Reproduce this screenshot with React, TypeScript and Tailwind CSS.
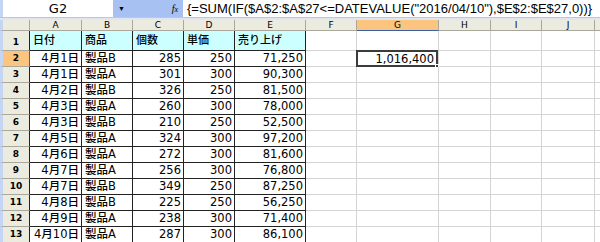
const cols = ['A', 'B', 'C', 'D', 'E', 'F', 'G', 'H', 'I', 'J']

const rows: [string, string, string, string, string][] = [
  ['4月1日', '製品B', '285', '250', '71,250'],
  ['4月1日', '製品A', '301', '300', '90,300'],
  ['4月2日', '製品B', '326', '250', '81,500'],
  ['4月3日', '製品A', '260', '300', '78,000'],
  ['4月3日', '製品B', '210', '250', '52,500'],
  ['4月5日', '製品A', '324', '300', '97,200'],
  ['4月6日', '製品A', '272', '300', '81,600'],
  ['4月7日', '製品A', '256', '300', '76,800'],
  ['4月7日', '製品B', '349', '250', '87,250'],
  ['4月8日', '製品B', '225', '250', '56,250'],
  ['4月9日', '製品A', '238', '300', '71,400'],
  ['4月10日', '製品A', '287', '300', '86,100'],
]

const grid = 'grid grid-cols-[30px_52px_51px_51px_51px_71px_51px_82px_52px_51px_53px_5px]'
const jp = "font-['DejaVu_Sans','Noto_Sans_CJK_JP',sans-serif]"
const num = "font-['DejaVu_Sans',sans-serif]"

export default function App() {
  return (
    <div className="w-[600px] h-[242px] overflow-hidden bg-white text-black">
      {/* formula bar */}
      <div className="flex h-[18px] border-b border-[#b8c8e0] bg-[#c4d6f4]">
        <div className="w-[3px]" />
        <div className={`w-[110px] bg-white flex items-center justify-center text-[13px] ${num}`}>G2</div>
        <div className="w-[70px] bg-[#a7c1f2] flex items-center justify-between px-[5px]">
          <span className="text-[7px] leading-none">▼</span>
          <span className="italic text-[10px] font-['Liberation_Serif',serif]">f<span className="text-[8px]">x</span></span>
        </div>
        <div className="flex-1 bg-white flex items-center pl-[4px] whitespace-nowrap overflow-hidden">
          <span className="text-[13px] font-['Liberation_Sans',sans-serif]">
            {'{=SUM(IF($A$2:$A$27<=DATEVALUE("2016/04/10"),$E$2:$E$27,0))}'}
          </span>
        </div>
      </div>
      <div className="h-[2px] bg-[#dfe6f2]" />

      {/* column headers */}
      <div className={`${grid} h-[11px] text-[9px] leading-[10px] ${num}`}>
        <div className="bg-[#ecebdf] border-r border-b border-[#a9a89a] border-l-[3px] border-l-[#c4d6f4]" />
        {cols.map((c) => (
          <div
            key={c}
            className={
              c === 'G'
                ? 'bg-[#fbc57f] border-r border-[#a9a89a] border-b border-b-[#3b5fa8] text-center'
                : 'bg-[#ecebdf] border-r border-b border-[#a9a89a] text-center'
            }
          >
            {c}
          </div>
        ))}
        <div className="bg-[#ecebdf] border-b border-[#a9a89a]" />
      </div>

      {/* row 1 */}
      <div className={`${grid} h-[20px]`}>
        <div className={`bg-[#ecebdf] border-b border-[#a9a89a] border-r border-r-[#222] border-l-[3px] border-l-[#c4d6f4] flex items-end justify-center pb-[1px] text-[9px] font-bold ${num}`}>1</div>
        {['日付', '商品', '個数', '単価', '売り上げ'].map((h) => (
          <div key={h} className={`bg-[#ccffff] border-r border-b border-[#222] flex items-end pl-[3px] pb-[1px] text-[11px] font-medium ${jp}`}>
            {h}
          </div>
        ))}
        {[0, 1, 2, 3, 4].map((i) => (
          <div key={i} className="border-r border-b border-[#d4d4d4]" />
        ))}
        <div className="border-b border-[#d4d4d4]" />
      </div>

      {/* data rows */}
      {rows.map((r, i) => {
        const n = i + 2
        const sel = n === 2
        return (
          <div key={n} className={`${grid} h-[16px] text-[11.5px] leading-[15px]`}>
            <div
              className={`${sel ? 'bg-[#fbc57f] border-r-[#3b5fa8]' : 'bg-[#ecebdf] border-r-[#222]'} border-b border-[#a9a89a] border-r border-l-[3px] border-l-[#c4d6f4] text-center text-[9px] font-bold ${num}`}
            >
              {n}
            </div>
            <div className={`border-r border-b border-[#222] text-right pr-[2px] font-medium ${jp}`}>{r[0]}</div>
            <div className={`border-r border-b border-[#222] pl-[3px] font-medium ${jp}`}>{r[1]}</div>
            <div className={`border-r border-b border-[#222] text-right pr-[2px] ${num}`}>{r[2]}</div>
            <div className={`border-r border-b border-[#222] text-right pr-[2px] ${num}`}>{r[3]}</div>
            <div className={`border-r border-b border-[#222] text-right pr-[2px] ${num}`}>{r[4]}</div>
            <div className="border-r border-b border-[#d4d4d4]" />
            <div className="relative border-r border-b border-[#d4d4d4]">
              {sel && (
                <div className={`absolute inset-[-1px_0_-1px_-1px] border-2 border-[#3c3c3c] text-right pr-[2px] leading-[14px] ${num}`}>
                  1,016,400
                  <div className="absolute right-[-3px] bottom-[-3px] w-[4px] h-[4px] bg-[#3c3c3c] border border-white" />
                </div>
              )}
            </div>
            <div className="border-r border-b border-[#d4d4d4]" />
            <div className="border-r border-b border-[#d4d4d4]" />
            <div className="border-r border-b border-[#d4d4d4]" />
            <div className="border-b border-[#d4d4d4]" />
          </div>
        )
      })}
    </div>
  )
}
